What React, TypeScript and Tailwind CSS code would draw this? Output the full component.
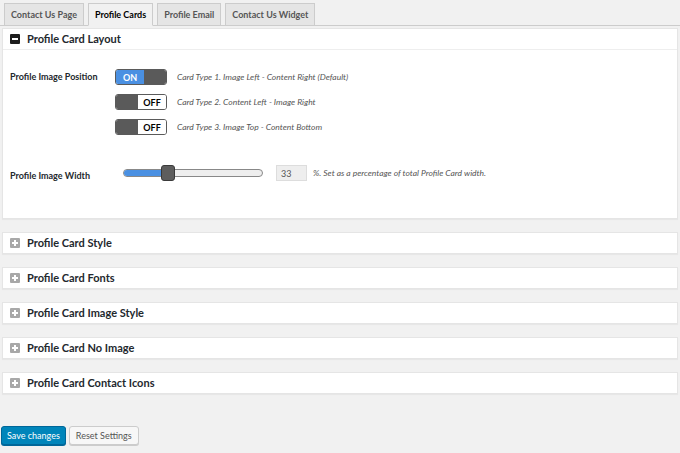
import type { ReactNode } from "react";

const tabs = ["Contact Us Page", "Profile Cards", "Profile Email", "Contact Us Widget"];

const collapsed = [
  "Profile Card Style",
  "Profile Card Fonts",
  "Profile Card Image Style",
  "Profile Card No Image",
  "Profile Card Contact Icons",
];

const positions = [
  { on: true, text: "Card Type 1. Image Left - Content Right (Default)" },
  { on: false, text: "Card Type 2. Content Left - Image Right" },
  { on: false, text: "Card Type 3. Image Top - Content Bottom" },
];

function Toggle({ on }: { on: boolean }) {
  return (
    <div className="flex h-[16px] w-[52px] overflow-hidden rounded-[3px] border border-[#5a5a5a] text-[9px] font-bold leading-none">
      {on ? (
        <>
          <div className="flex w-[28px] items-center justify-center bg-[#4a90e2] text-white">ON</div>
          <div className="flex-1 bg-[#5a5a5a]" />
        </>
      ) : (
        <>
          <div className="w-[22px] bg-[#5a5a5a]" />
          <div className="flex flex-1 items-center justify-center bg-white text-black">OFF</div>
        </>
      )}
    </div>
  );
}

function Box({ open }: { open: boolean }) {
  return (
    <div
      className={`relative h-[10px] w-[10px] rounded-[1px] ${open ? "bg-[#1d1d1d]" : "bg-[#a8a8a8]"}`}
    >
      <div className="absolute left-[2px] top-[4px] h-[2px] w-[6px] bg-white" />
      {!open && <div className="absolute left-[4px] top-[2px] h-[6px] w-[2px] bg-white" />}
    </div>
  );
}

function Panel({ title, open, children }: { title: string; open?: boolean; children?: ReactNode }) {
  return (
    <div className="mx-[2px] border border-[#e5e5e5] bg-white shadow-[0_1px_1px_rgba(0,0,0,0.04)]">
      <div
        className={`flex items-center gap-[7px] pl-[7px] ${open ? "h-[21px] border-b border-[#eeeeee]" : "h-[20px]"}`}
      >
        <Box open={!!open} />
        <span className="text-[11px] font-bold text-[#23282d]">{title}</span>
      </div>
      {children}
    </div>
  );
}

export default function App() {
  return (
    <div
      className="h-[453px] w-[680px] overflow-hidden bg-[#f1f1f1] text-[#444]"
      style={{ fontFamily: 'Lato, "Open Sans", sans-serif' }}
    >
      {/* Tabs */}
      <div className="flex h-[26px] items-end gap-[4px] border-b border-[#cccccc] pl-[4px]">
        {tabs.map((t, i) => (
          <div
            key={t}
            className={`-mb-px flex h-[23px] items-center border border-[#cccccc] px-[6px] text-[9px] font-bold ${
              i === 1 ? "border-b-[#f1f1f1] bg-[#f1f1f1] text-black" : "bg-[#e5e5e5] text-[#555]"
            }`}
          >
            {t}
          </div>
        ))}
      </div>

      <div className="mt-[2px] flex flex-col gap-[13px]">
        <Panel title="Profile Card Layout" open>
          <div className="h-[168px] pl-[7px] pt-[19px]">
            <div className="flex">
              <div className="w-[105px] pt-[1px] text-[9px] font-bold text-[#23282d]">
                Profile Image Position
              </div>
              <div className="flex flex-col gap-[9px]">
                {positions.map((p) => (
                  <div key={p.text} className="flex items-center gap-[10px]">
                    <Toggle on={p.on} />
                    <span className="text-[8.5px] italic text-[#555]">{p.text}</span>
                  </div>
                ))}
              </div>
            </div>

            <div className="mt-[29px] flex items-center">
              <div className="w-[113px] pt-[5px] text-[9px] font-bold text-[#23282d]">
                Profile Image Width
              </div>
              <div className="relative h-[8px] w-[140px] rounded-[4px] border border-[#888] bg-[#eeeeee]">
                <div className="h-full w-[40px] rounded-l-[4px] bg-[#4a90e2]" />
                <div className="absolute left-[37px] top-[-5px] h-[16px] w-[14px] rounded-[3px] border border-[#3a3a3a] bg-[#5d5d5d]" />
              </div>
              <div className="ml-[13px] flex h-[16px] w-[31px] items-center border border-[#dddddd] bg-[#eeeeee] pl-[4px] text-[9px] text-[#555]">
                33
              </div>
              <span className="ml-[6px] text-[8.5px] italic text-[#555]">
                %. Set as a percentage of total Profile Card width.
              </span>
            </div>
          </div>
        </Panel>

        {collapsed.map((t) => (
          <Panel key={t} title={t} />
        ))}
      </div>

      {/* Buttons */}
      <div className="ml-[1px] mt-[32px] flex gap-[3px]">
        <button className="h-[19px] rounded-[3px] border border-[#006799] bg-[#0085ba] px-[5px] text-[9px] text-white shadow-[0_1px_0_#006799]">
          Save changes
        </button>
        <button className="h-[19px] rounded-[3px] border border-[#cccccc] bg-[#f7f7f7] px-[6px] text-[9px] text-[#555] shadow-[0_1px_0_#ccc]">
          Reset Settings
        </button>
      </div>
    </div>
  );
}
